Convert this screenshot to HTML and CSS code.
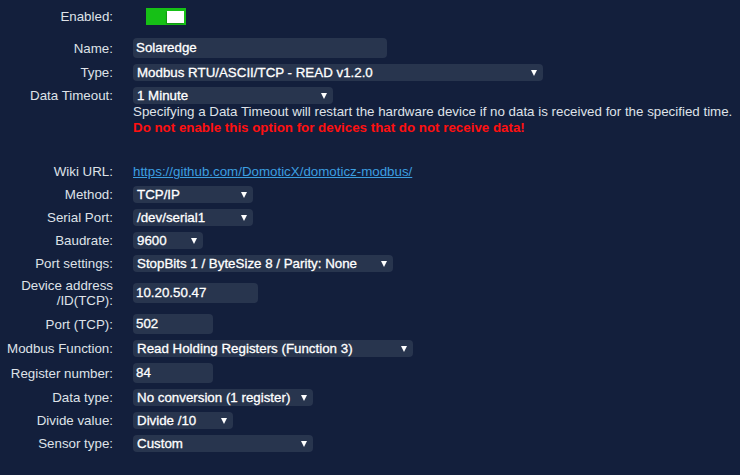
FILE: index.html
```html
<!DOCTYPE html>
<html>
<head>
<meta charset="utf-8">
<link rel="stylesheet" href="styles.css">
</head>
<body>
<div class="form">
  <div class="row r-toggle">
    <div class="lbl">Enabled:</div>
    <div class="ctl"><span class="toggle"><span class="knob"></span></span></div>
  </div>
  <div class="row r-input r-name">
    <div class="lbl">Name:</div>
    <div class="ctl"><span class="inp w254">Solaredge</span></div>
  </div>
  <div class="row">
    <div class="lbl">Type:</div>
    <div class="ctl"><span class="sel w410">Modbus RTU/ASCII/TCP - READ v1.2.0</span></div>
  </div>
  <div class="row r-timeout">
    <div class="lbl">Data Timeout:</div>
    <div class="ctl">
      <span class="sel w200">1 Minute</span>
      <div class="note">Specifying a Data Timeout will restart the hardware device if no data is received for the specified time.</div>
      <div class="warn">Do not enable this option for devices that do not receive data!</div>
    </div>
  </div>
  <div class="row r-wiki">
    <div class="lbl">Wiki URL:</div>
    <div class="ctl"><a class="link" href="#">https://github.com/DomoticX/domoticz-modbus/</a></div>
  </div>
  <div class="row">
    <div class="lbl">Method:</div>
    <div class="ctl"><span class="sel w120">TCP/IP</span></div>
  </div>
  <div class="row">
    <div class="lbl">Serial Port:</div>
    <div class="ctl"><span class="sel w120">/dev/serial1</span></div>
  </div>
  <div class="row">
    <div class="lbl">Baudrate:</div>
    <div class="ctl"><span class="sel w70">9600</span></div>
  </div>
  <div class="row">
    <div class="lbl">Port settings:</div>
    <div class="ctl"><span class="sel w260">StopBits 1 / ByteSize 8 / Parity: None</span></div>
  </div>
  <div class="row r-input r-dev">
    <div class="lbl two">Device address<br>/ID(TCP):</div>
    <div class="ctl"><span class="inp w125">10.20.50.47</span></div>
  </div>
  <div class="row r-input">
    <div class="lbl">Port (TCP):</div>
    <div class="ctl"><span class="inp w80">502</span></div>
  </div>
  <div class="row">
    <div class="lbl">Modbus Function:</div>
    <div class="ctl"><span class="sel w280">Read Holding Registers (Function 3)</span></div>
  </div>
  <div class="row r-input">
    <div class="lbl">Register number:</div>
    <div class="ctl"><span class="inp w80">84</span></div>
  </div>
  <div class="row">
    <div class="lbl">Data type:</div>
    <div class="ctl"><span class="sel w180">No conversion (1 register)</span></div>
  </div>
  <div class="row">
    <div class="lbl">Divide value:</div>
    <div class="ctl"><span class="sel w100">Divide /10</span></div>
  </div>
  <div class="row">
    <div class="lbl">Sensor type:</div>
    <div class="ctl"><span class="sel w180">Custom</span></div>
  </div>
</div>
</body>
</html>
```
FILE: styles.css
```css
html, body {
  margin: 0;
  padding: 0;
  background: #131f3c;
}
body {
  font-family: "Liberation Sans", Arial, sans-serif;
  font-size: 13.33px;
  color: #dfe2e8;
  width: 740px;
  height: 475px;
  overflow: hidden;
}
.form {
  padding-top: 8px;
  display: flex;
  flex-direction: column;
}
.row {
  display: flex;
  align-items: center;
  margin-bottom: 6px;
}
.lbl {
  width: 113px;
  flex: none;
  text-align: right;
  line-height: 15px;
}
.ctl {
  margin-left: 20px;
}
.r-toggle { margin-bottom: 13px; }
.toggle {
  display: block;
  width: 40px;
  height: 17px;
  margin-left: 13px;
  background: #16c016;
  position: relative;
}
.knob {
  position: absolute;
  left: 21px;
  top: 3px;
  width: 17px;
  height: 12px;
  background: #ffffff;
  box-shadow: -1px 1px 1px rgba(0,0,0,0.2);
}
.sel, .inp {
  display: block;
  box-sizing: border-box;
  background: #28354e;
  border-radius: 4px;
  color: #ffffff;
  white-space: nowrap;
  -webkit-text-stroke: 0.3px #ffffff;
}
.sel {
  height: 17px;
  line-height: 17px;
  padding-left: 4px;
  position: relative;
}
.sel::after {
  content: "";
  position: absolute;
  right: 6px;
  top: 6px;
  border-left: 3.5px solid transparent;
  border-right: 3.5px solid transparent;
  border-top: 6px solid #ffffff;
}
.inp {
  height: 20px;
  line-height: 20px;
  padding-left: 3px;
}
.r-timeout { align-items: flex-start; margin-bottom: 28px; }
.r-timeout .lbl { line-height: 17px; }
.note {
  line-height: 16px;
  color: #dfe2e8;
  white-space: nowrap;
}
.warn {
  line-height: 16px;
  color: #ff1010;
  font-weight: bold;
  white-space: nowrap;
}
.r-wiki .lbl, .link { line-height: 16px; }
.link {
  color: #3c9ee0;
  text-decoration: underline;
}
.w70 { width: 70px; }
.w80 { width: 80px; }
.w100 { width: 100px; }
.w120 { width: 120px; }
.w125 { width: 125px; }
.w180 { width: 180px; }
.w200 { width: 200px; }
.w254 { width: 254px; }
.w260 { width: 260px; }
.w280 { width: 280px; }
.w410 { width: 410px; }
```
